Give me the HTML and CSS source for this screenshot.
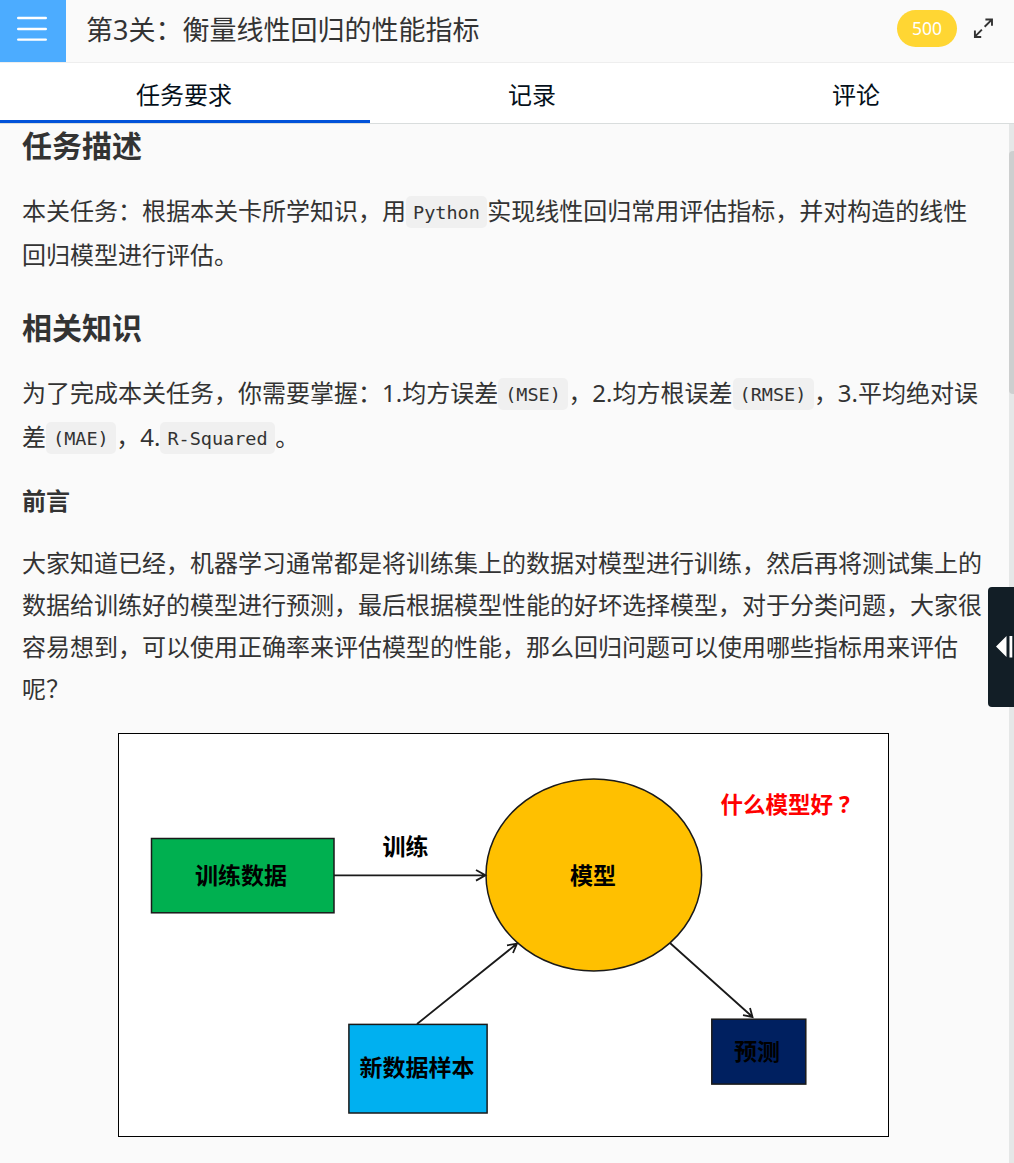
FILE: index.html
```html
<!DOCTYPE html>
<html lang="zh-CN">
<head>
<meta charset="utf-8">
<title>第3关：衡量线性回归的性能指标</title>
<link rel="stylesheet" href="styles.css">
</head>
<body>
<div class="page">
  <header class="header">
    <button class="menu" aria-label="菜单">
      <svg width="30" height="26" viewBox="0 0 30 26" fill="none" stroke="#fff" stroke-width="2.4" stroke-linecap="round"><path d="M1.2 2H28.8M1.2 13H28.8M1.2 23.6H28.8"/></svg>
    </button>
    <h1 class="title">第3关：衡量线性回归的性能指标</h1>
    <span class="score">500</span>
    <svg class="expand" width="22" height="22" viewBox="0 0 22 22" fill="none" stroke="#333" stroke-width="2"><path d="M12.2 9.2L20 1.4M13 1.6H19.9V8.2M9.3 12.2L1.8 19.7M2 13.2V19.9H8.6"/></svg>
  </header>
  <nav class="tabs">
    <a class="tab active">任务要求</a>
    <a class="tab">记录</a>
    <a class="tab">评论</a>
  </nav>
  <main class="content">
    <article class="article">
      <h2>任务描述</h2>
      <p>本关任务：根据本关卡所学知识，用<code>Python</code>实现线性回归常用评估指标，并对构造的线性<br>回归模型进行评估。</p>
      <h2>相关知识</h2>
      <p>为了完成本关任务，你需要掌握：1.均方误差<code>(MSE)</code>，2.均方根误差<code>(RMSE)</code>，3.平均绝对误<br>差<code>(MAE)</code>，4.<code>R-Squared</code>。</p>
      <h4>前言</h4>
      <p class="plain">大家知道已经，机器学习通常都是将训练集上的数据对模型进行训练，然后再将测试集上的<br>数据给训练好的模型进行预测，最后根据模型性能的好坏选择模型，对于分类问题，大家很<br>容易想到，可以使用正确率来评估模型的性能，那么回归问题可以使用哪些指标用来评估<br>呢？</p>
      <svg class="diagram" width="771" height="404" viewBox="118 733 771 404">
        <rect x="118.5" y="733.5" width="770" height="403" fill="#fff" stroke="#000"/>
        <g stroke="#1a1a1a" stroke-width="1.5">
          <rect x="151.5" y="838.5" width="182.5" height="74.3" fill="#00b050"/>
          <ellipse cx="593.8" cy="875" rx="107.8" ry="96" fill="#ffc000"/>
          <rect x="348.9" y="1024.4" width="138.2" height="88.6" fill="#00b0f0"/>
          <rect x="711.8" y="1019.2" width="94" height="64.9" fill="#002060"/>
        </g>
        <g fill="none" stroke="#1a1a1a" stroke-width="1.8">
          <path d="M334 875.3H485M476 870L485.5 875.3L476 880.6"/>
          <path d="M417 1024L516.5 944M507 945.3L517 943.7L513 953"/>
          <path d="M670 943L752 1016.5M750 1008L752.5 1017L743 1015.2"/>
        </g>
        <g class="labels">
          <text x="241" y="884">训练数据</text>
          <text x="405.5" y="855">训练</text>
          <text x="593" y="884">模型</text>
          <text x="417" y="1075.5">新数据样本</text>
          <text x="757" y="1059.5">预测</text>
          <text class="question" x="720.5" y="813">什么模型好<tspan x="839">?</tspan></text>
        </g>
      </svg>
    </article>
    <div class="track"><div class="thumb"></div></div>
  </main>
  <button class="handle" aria-label="收起">
    <svg width="17" height="22" viewBox="0 0 17 22" fill="#fff"><path d="M0 10.5L10.5 0V21ZM13.5 0H16.3V21.5H13.5Z"/></svg>
  </button>
</div>
</body>
</html>
```
FILE: styles.css
```css
* { box-sizing: border-box; }
body {
  margin: 0;
  background: #fafafa;
  color: #333;
  font-family: "Noto Sans", "Noto Sans CJK SC", sans-serif;
}
button { border: 0; padding: 0; }
.page {
  position: relative;
  display: flex;
  flex-direction: column;
  height: 1163px;
  overflow: hidden;
}
.header {
  display: flex;
  align-items: center;
  height: 63px;
  padding-right: 20px;
  border-bottom: 1px solid #eee;
}
.menu {
  display: flex;
  align-items: center;
  justify-content: center;
  width: 66px;
  height: 62px;
  padding: 0 2px 5px 0;
  background: #4cacff;
}
.title {
  flex: 1;
  margin: 0 0 0 20px;
  padding-bottom: 2px;
  font-size: 27px;
  font-weight: 400;
  line-height: 40px;
  white-space: nowrap;
}
.score {
  width: 60px;
  height: 37px;
  margin: 0 16px 5px 0;
  border-radius: 19px;
  background: #ffd633;
  color: #fff;
  font-size: 17.5px;
  line-height: 37px;
  text-align: center;
}
.expand { width: 21px; height: 21px; margin-bottom: 6px; }
.tabs {
  display: flex;
  height: 61px;
  border-bottom: 1px solid #d9dddd;
  background: #fff;
}
.tab {
  flex: none;
  width: 324px;
  height: 60px;
  color: #05101a;
  font-size: 24px;
  line-height: 63px;
  text-align: center;
}
.tab.active {
  width: 370px;
  padding-right: 2px;
  border-bottom: 3px solid #0152d9;
}
.content { display: flex; flex: 1; }
.article {
  flex: 1;
  padding-left: 22px;
  font-size: 24px;
  white-space: nowrap;
}
h2 {
  margin: 0 0 21px;
  font-size: 30px;
  font-weight: 700;
  line-height: 44px;
}
h4 {
  margin: 0 0 23px;
  font-size: 24px;
  line-height: 37px;
}
p { margin: 0 0 29px; line-height: 44px; }
h2 ~ h2 + p { margin-bottom: 23px; }
p.plain { margin-bottom: 23px; line-height: 42px; }
code {
  padding: 6px 7.5px 5px 7px;
  border-radius: 5px;
  background: #f0f0f0;
  font-family: "DejaVu Sans Mono", monospace;
  font-size: 18.5px;
  line-height: 1;
  vertical-align: 1px;
}
.diagram { display: block; margin-left: 96px; }
.labels {
  fill: #000;
  font-size: 23px;
  font-weight: 700;
  text-anchor: middle;
}
.labels .question { fill: #f00; font-size: 22.5px; text-anchor: start; }
.track { width: 5px; background: #e5e7e7; }
.thumb {
  height: 243px;
  margin-top: 27px;
  border-radius: 4px 0 0 4px;
  background: #cdcfcf;
}
.handle {
  position: absolute;
  top: 587px;
  right: 0;
  display: flex;
  align-items: center;
  width: 26px;
  height: 120px;
  padding-left: 8px;
  border-radius: 4px 0 0 4px;
  background: #121e26;
}
```
